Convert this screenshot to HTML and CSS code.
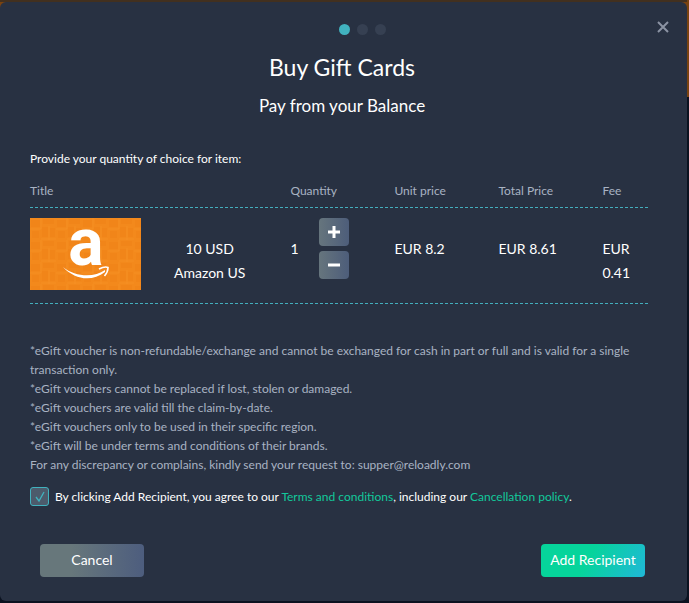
FILE: index.html
```
<!DOCTYPE html>
<html lang="en">
<head>
    <meta charset="utf-8">
    <title>Buy Gift Cards</title>
    <link rel="stylesheet" href="styles.css">
</head>
<body>
    <div class="modal" role="dialog" aria-labelledby="modal-title">
        <div class="modal-top">
            <div class="steps">
                <span class="step active"></span>
                <span class="step"></span>
                <span class="step"></span>
            </div>
            <button class="close" type="button" aria-label="Close">
                <svg width="12" height="12" viewBox="0 0 12 12"><path d="M1 1L11 11M11 1L1 11"/></svg>
            </button>
        </div>

        <h1 class="title" id="modal-title">Buy Gift Cards</h1>
        <h2 class="subtitle">Pay from your Balance</h2>

        <p class="intro">Provide your quantity of choice for item:</p>

        <table class="items">
            <thead>
                <tr>
                    <th class="col-title">Title</th>
                    <th class="col">Quantity</th>
                    <th class="col">Unit price</th>
                    <th class="col">Total Price</th>
                    <th>Fee</th>
                </tr>
            </thead>
            <tbody>
                <tr>
                    <td>
                        <div class="product">
                            <svg class="card" width="111" height="72" viewBox="0 0 111 72">
                                <defs>
                                    <pattern id="tiles" width="26" height="22" patternUnits="userSpaceOnUse">
                                        <path d="M1 2h9v7H1zM13 1h11v5H13zM12 9h6v10h-6zM2 13h7v7H2zM20 10h5v9h-5z" fill="#ee7a10" fill-opacity=".3"/>
                                        <path d="M0 11h11V0M19 8v14M11 21h15" stroke="#ffa53a" stroke-opacity=".15" fill="none"/>
                                    </pattern>
                                </defs>
                                <rect width="111" height="72" fill="#f3891c"/>
                                <rect width="111" height="72" fill="url(#tiles)"/>
                                <text class="card-letter" x="56" y="47" text-anchor="middle">a</text>
                                <path d="M33 49C45 59 64 60 75 52L75 54C62 64 45 62 33 49Z" fill="#fff"/>
                                <path d="M69 51Q75 48 78 49.500Q78 54 74.500 58" stroke="#fff" stroke-width="1.600" fill="none"/>
                            </svg>
                            <div class="product-name">10 USD<br>Amazon US</div>
                        </div>
                    </td>
                    <td>
                        <div class="quantity">
                            <span class="count">1</span>
                            <div class="counter">
                                <button class="count-btn" type="button" aria-label="Increase">
                                    <svg width="12" height="12" viewBox="0 0 12 12"><path d="M0 6H12M6 0V12"/></svg>
                                </button>
                                <button class="count-btn" type="button" aria-label="Decrease">
                                    <svg width="12" height="12" viewBox="0 0 12 12"><path d="M0 6H12"/></svg>
                                </button>
                            </div>
                        </div>
                    </td>
                    <td class="price">EUR 8.2</td>
                    <td class="price">EUR 8.61</td>
                    <td class="price">EUR 0.41</td>
                </tr>
            </tbody>
        </table>

        <div class="notes">
            <p>*eGift voucher is non-refundable/exchange and cannot be exchanged for cash in part or full and is valid for a single transaction only.</p>
            <p>*eGift vouchers cannot be replaced if lost, stolen or damaged.</p>
            <p>*eGift vouchers are valid till the claim-by-date.</p>
            <p>*eGift vouchers only to be used in their specific region.</p>
            <p>*eGift will be under terms and conditions of their brands.</p>
            <p>For any discrepancy or complains, kindly send your request to: supper@reloadly.com</p>
        </div>

        <div class="agree">
            <input class="check" type="checkbox" id="agree" checked>
            <label for="agree">By clicking Add Recipient, you agree to our <a href="#">Terms and conditions</a>, including our <a href="#">Cancellation policy</a>.</label>
        </div>

        <div class="actions">
            <button class="btn cancel" type="button">Cancel</button>
            <button class="btn add" type="button">Add Recipient</button>
        </div>
    </div>
</body>
</html>
```
FILE: styles.css
```
* {
    margin: 0;
    padding: 0;
    box-sizing: border-box;
}

body {
    padding: 2px 2px 2px 0;
    background: linear-gradient(#42301f 2px, transparent 2px) 0 0 / calc(100% - 2px) 100% no-repeat,
        linear-gradient(#7a4310 97px, #0b1220 97px);
    font-family: Lato, "Liberation Sans", sans-serif;
    font-size: 12px;
    color: #fff;
}

.modal {
    padding: 16px 37px 24px 30px;
    border-radius: 6px;
    background: #283142;
}

.modal-top {
    position: relative;
    height: 22px;
}

.steps {
    display: flex;
    justify-content: center;
    align-items: center;
    gap: 7px;
    height: 22px;
    padding-left: 44px;
}

.step {
    width: 11px;
    height: 11px;
    border-radius: 50%;
    background: #364052;
}

.step.active {
    background: #41b2bf;
}

.close {
    position: absolute;
    top: 0;
    right: -23px;
    width: 20px;
    height: 20px;
    border: none;
    background: none;
    cursor: pointer;
}

.close svg {
    fill: none;
    stroke: #8b93a3;
    stroke-width: 2;
}

.title {
    margin-top: 12px;
    padding-left: 4px;
    font-size: 23px;
    font-weight: 400;
    line-height: 30px;
    text-align: center;
}

.subtitle {
    margin-top: 12px;
    padding-left: 4px;
    font-size: 17px;
    font-weight: 400;
    line-height: 24px;
    text-align: center;
}

.intro {
    margin-top: 31px;
    line-height: 19px;
}

.items {
    width: 100%;
    margin-top: 9px;
    border-spacing: 0;
    table-layout: fixed;
}

/* dashed line drawn once per row so it runs through all the cells */
.items tr {
    background: repeating-linear-gradient(90deg, #43aebd 0 3px, transparent 3px 5px) bottom / 100% 1px no-repeat;
}

.items th {
    padding: 4px 0 8px;
    font-weight: 400;
    line-height: 19px;
    text-align: left;
    color: #a9b3c3;
}

.items td {
    padding: 10px 0 14px;
    font-size: 14px;
    line-height: 24px;
    vertical-align: top;
}

.items .price {
    padding-top: 29px;
}

.col-title {
    width: 42%;
}

.col {
    width: 104px;
}

.product {
    display: flex;
}

.product-name {
    flex: 1;
    padding: 19px 12px 0 0;
    text-align: center;
}

.card {
    display: block;
    overflow: visible;
}

.card-letter {
    font-family: Roboto, sans-serif;
    font-size: 66px;
    font-weight: 700;
    fill: #fff;
}

.quantity {
    display: flex;
}

.count {
    width: 29px;
    padding-top: 19px;
}

.counter {
    display: flex;
    flex-direction: column;
    gap: 5px;
}

.count-btn {
    display: flex;
    justify-content: center;
    align-items: center;
    width: 30px;
    height: 28px;
    border: none;
    border-radius: 4px;
    background: linear-gradient(90deg, #66757d, #4d5d7a);
    cursor: pointer;
}

.count-btn svg {
    stroke: #fff;
    stroke-width: 3;
}

.notes {
    margin-top: 37px;
    line-height: 19px;
    color: #a9b3c3;
}

.agree {
    display: flex;
    align-items: center;
    gap: 6px;
    margin-top: 13px;
    line-height: 19px;
}

.agree a {
    color: #12c99b;
    text-decoration: none;
}

.check {
    appearance: none;
    width: 19px;
    height: 19px;
    border: 1px solid #41b2bf;
    border-radius: 3px;
    background: #4c5b6c url("data:image/svg+xml,%3Csvg xmlns='http://www.w3.org/2000/svg' viewBox='0 0 17 17'%3E%3Cpath d='M5 9L8 13L13 4' fill='none' stroke='%2341b2bf' stroke-width='1.300'/%3E%3C/svg%3E") center / 17px no-repeat;
}

.actions {
    display: flex;
    justify-content: space-between;
    margin-top: 38px;
    padding: 0 5px 0 10px;
}

.btn {
    width: 104px;
    height: 33px;
    padding-bottom: 2px;
    border: none;
    border-radius: 4px;
    font-family: inherit;
    font-size: 14px;
    color: #fff;
    cursor: pointer;
}

.cancel {
    background: linear-gradient(90deg, #67777b 30%, #4d5d7e);
}

.add {
    background: linear-gradient(120deg, #06d49b 45%, #20b8d8);
}
```
